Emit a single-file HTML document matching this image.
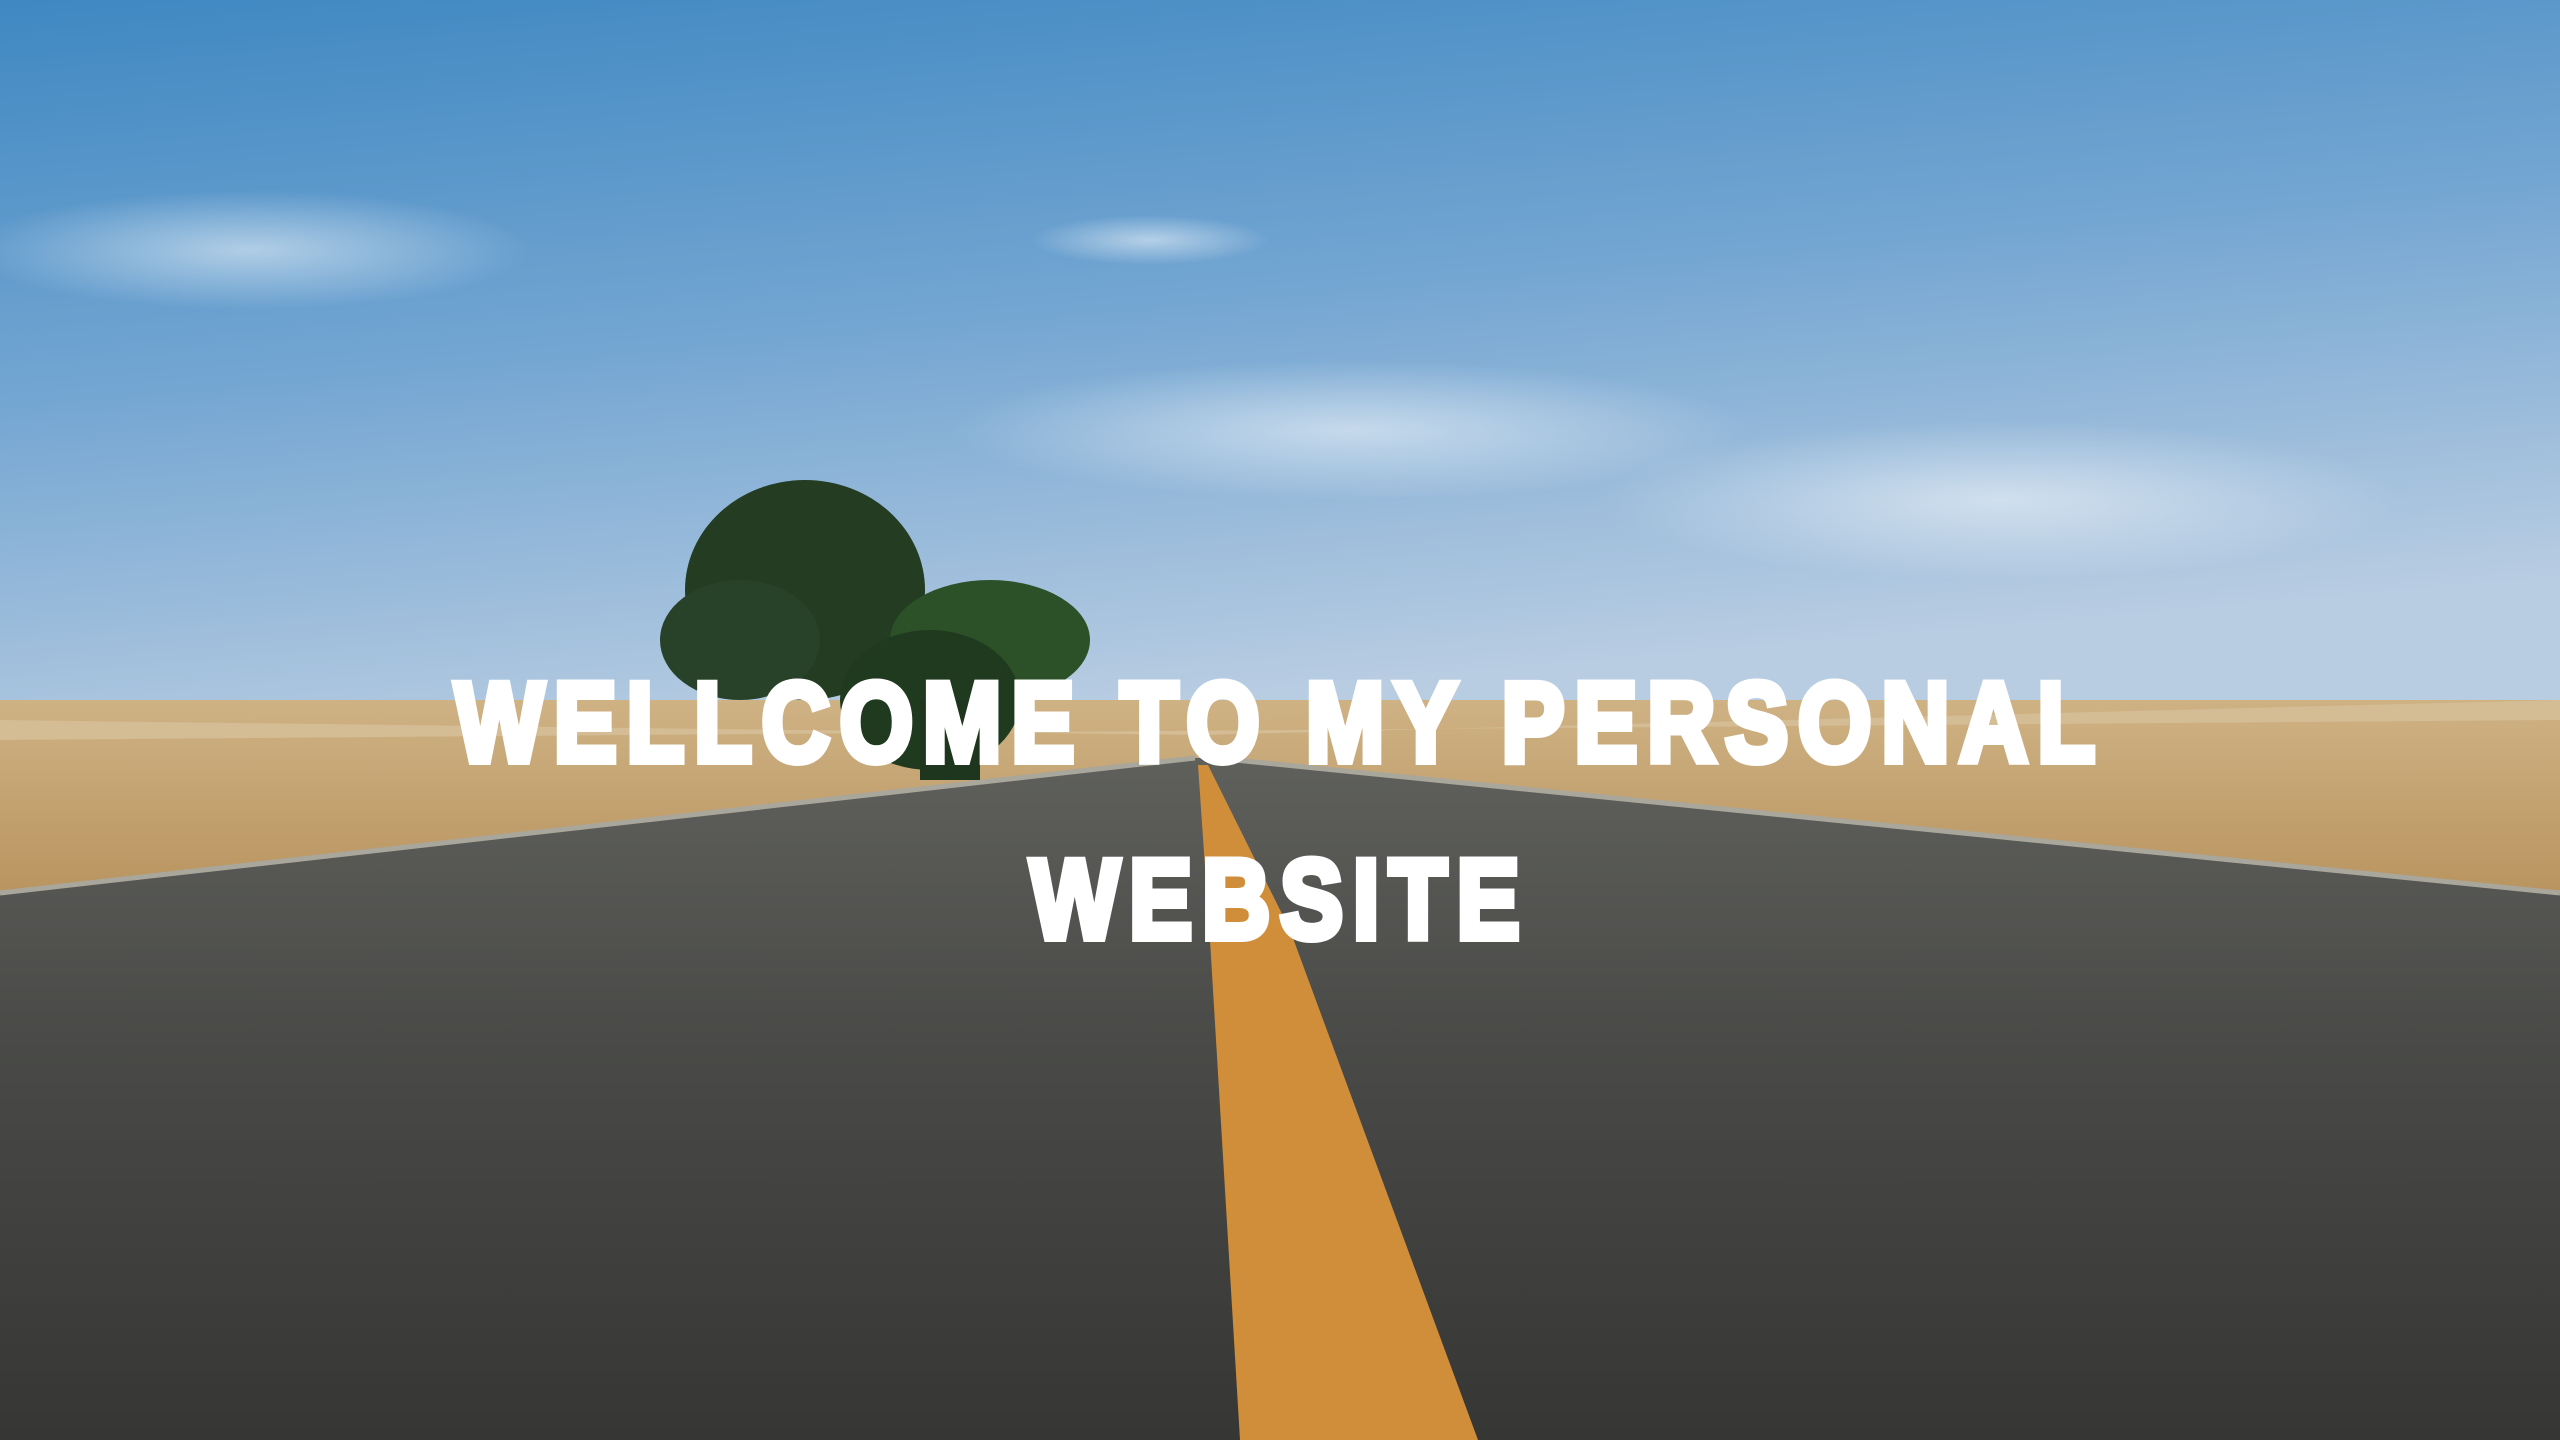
<!DOCTYPE html>
<html><head><meta charset="utf-8"><style>
html,body{margin:0;padding:0;width:2560px;height:1440px;overflow:hidden}
body{position:relative;background:#4d8fc4}
svg{position:absolute;left:0;top:0}
.t{position:absolute;left:0;width:2560px;text-align:center;color:#fff;font-family:"Liberation Sans",sans-serif;font-weight:bold;font-size:112px;letter-spacing:12px;line-height:177px;top:634px;transform:scaleX(0.84);transform-origin:1280px 0;-webkit-text-stroke:8px #fff}
</style></head><body>
<svg width="2560" height="1440" viewBox="0 0 2560 1440">
<defs>
<linearGradient id="sky" x1="0" y1="0" x2="0.3" y2="1">
<stop offset="0" stop-color="#3f88c2"/><stop offset="0.5" stop-color="#74a6d2"/><stop offset="1" stop-color="#b9cde2"/></linearGradient>
<linearGradient id="road" x1="0" y1="0" x2="0" y2="1">
<stop offset="0" stop-color="#5f605c"/><stop offset="0.4" stop-color="#4a4b48"/><stop offset="1" stop-color="#363634"/></linearGradient>
<linearGradient id="grass" x1="0" y1="0" x2="0" y2="1">
<stop offset="0" stop-color="#cfb284"/><stop offset="1" stop-color="#b8935e"/></linearGradient>
<radialGradient id="cl" cx="0.5" cy="0.5" r="0.5"><stop offset="0" stop-color="#fff" stop-opacity="0.5"/><stop offset="1" stop-color="#fff" stop-opacity="0"/></radialGradient>
</defs>
<rect width="2560" height="740" fill="url(#sky)"/>
<ellipse cx="250" cy="250" rx="280" ry="60" fill="url(#cl)"/>
<ellipse cx="1350" cy="430" rx="400" ry="70" fill="url(#cl)"/>
<ellipse cx="2000" cy="500" rx="400" ry="80" fill="url(#cl)"/>
<ellipse cx="1150" cy="240" rx="120" ry="25" fill="url(#cl)"/>
<rect y="700" width="2560" height="200" fill="url(#grass)"/>
<polygon points="0,720 1200,735 2560,700 2560,720 0,740" fill="#d4bc94"/>
<polygon points="0,893 1195,758 1215,758 2560,893 2560,1440 0,1440" fill="url(#road)"/>
<polyline points="0,893 1195,758" stroke="#a9a69c" stroke-width="5" fill="none"/>
<polyline points="1215,758 2560,893" stroke="#a9a69c" stroke-width="5" fill="none"/>
<polygon points="1198,765 1208,765 1290,930 1478,1440 1240,1440 1210,940" fill="#d08e3b"/>
<ellipse cx="805" cy="590" rx="120" ry="110" fill="#233c22"/>
<ellipse cx="740" cy="640" rx="80" ry="60" fill="#28422a"/>
<ellipse cx="990" cy="640" rx="100" ry="60" fill="#2c5128"/>
<ellipse cx="930" cy="700" rx="90" ry="70" fill="#1f3a1e"/>
<rect x="920" y="700" width="60" height="80" fill="#1e361d"/>
</svg>
<div class="t">WELLCOME TO MY PERSONAL<br>WEBSITE</div>
</body></html>
